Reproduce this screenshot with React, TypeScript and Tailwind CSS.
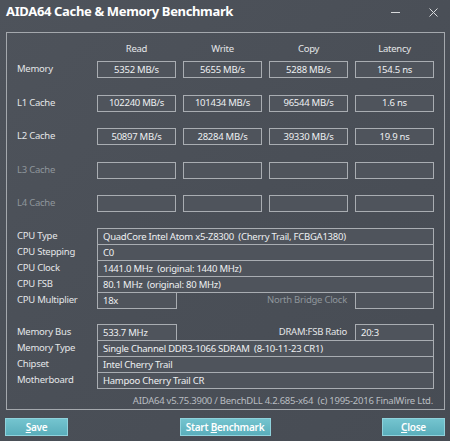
import React from 'react';

const font = { fontFamily: '"Noto Sans", "Open Sans", sans-serif' };

const cacheRows = [
  { label: 'Memory', values: ['5352 MB/s', '5655 MB/s', '5288 MB/s', '154.5 ns'], active: true },
  { label: 'L1 Cache', values: ['102240 MB/s', '101434 MB/s', '96544 MB/s', '1.6 ns'], active: true },
  { label: 'L2 Cache', values: ['50897 MB/s', '28284 MB/s', '39330 MB/s', '19.9 ns'], active: true },
  { label: 'L3 Cache', values: ['', '', '', ''], active: false },
  { label: 'L4 Cache', values: ['', '', '', ''], active: false },
];

const Box = ({ children, className = '' }: { children?: React.ReactNode; className?: string }) => (
  <div className={`h-[17px] border border-[#a9adb2] bg-[#4f545c] flex items-center leading-none whitespace-nowrap ${className}`}>{children}</div>
);

const Label = ({ children, dim }: { children: React.ReactNode; dim?: boolean }) => (
  <div className={`w-[80px] h-[17px] flex items-center ${dim ? 'text-[#8f969c]' : 'text-[#e4e6e8]'}`}>{children}</div>
);

export default function App() {
  return (
    <div className="w-[450px] h-[441px] bg-gradient-to-br from-[#4e535b] via-[#4a4f57] to-[#474c54] text-[9.5px] tracking-[-0.25px] select-none flex flex-col overflow-hidden" style={font}>
      {/* Title bar */}
      <div className="h-[28px] flex items-center pl-[6px] pr-[12px] pb-[4px]">
        <div className="text-[13px] font-bold text-white tracking-[-0.35px]">AIDA64 Cache &amp; Memory Benchmark</div>
        <div className="ml-auto flex items-center gap-[29px] text-[#d8dadc]">
          <svg width="9" height="9" viewBox="0 0 9 9"><path d="M0 4.5h9" stroke="currentColor" strokeWidth="1" /></svg>
          <svg width="9" height="9" viewBox="0 0 9 9"><path d="M0.5 0.5l8 8M8.5 0.5l-8 8" stroke="currentColor" strokeWidth="1" /></svg>
        </div>
      </div>

      {/* Group box */}
      <div className="ml-[6px] mr-[5px] mt-[4px] h-[378px] border border-[#a4a8ad] pl-[10px] flex flex-col">
        {/* Header */}
        <div className="flex pt-[9px] h-[28px] text-[#e4e6e8]">
          <div className="w-[80px]" />
          <div className="flex gap-[7px]">
            {['Read', 'Write', 'Copy', 'Latency'].map((h) => (
              <div key={h} className="w-[79px] text-center">{h}</div>
            ))}
          </div>
        </div>

        {/* Cache results */}
        <div className="flex flex-col gap-[16.5px]">
          {cacheRows.map((r) => (
            <div key={r.label} className="flex items-center">
              <Label dim={!r.active}>{r.label}</Label>
              <div className="flex gap-[7px]">
                {r.values.map((v, i) => (
                  <Box key={i} className="w-[79px] justify-center text-[#eef0f2]">{v}</Box>
                ))}
              </div>
            </div>
          ))}
        </div>

        {/* CPU info */}
        <div className="mt-[16px] flex flex-col">
          {[
            ['CPU Type', 'QuadCore Intel Atom x5-Z8300\u00a0 (Cherry Trail, FCBGA1380)'],
            ['CPU Stepping', 'C0'],
            ['CPU Clock', '1441.0 MHz\u00a0 (original: 1440 MHz)'],
            ['CPU FSB', '80.1 MHz\u00a0 (original: 80 MHz)'],
          ].map(([l, v], i) => (
            <div key={l} className={`flex ${i ? '-mt-px' : ''}`}>
              <Label>{l}</Label>
              <Box className="w-[337px] px-[5px] text-[#eef0f2]">{v}</Box>
            </div>
          ))}
          <div className="flex -mt-px">
            <Label>CPU Multiplier</Label>
            <Box className="w-[80px] px-[5px] text-[#eef0f2]">18x</Box>
            <div className="w-[178px] h-[17px] flex items-center justify-end pr-[8px] text-[#8f969c]">North Bridge Clock</div>
            <Box className="w-[79px]" />
          </div>
        </div>

        {/* Memory info */}
        <div className="mt-[15px] flex flex-col">
          <div className="flex">
            <Label>Memory Bus</Label>
            <Box className="w-[80px] px-[5px] text-[#eef0f2]">533.7 MHz</Box>
            <div className="w-[178px] h-[17px] flex items-center justify-end pr-[8px] text-[#e4e6e8]">DRAM:FSB Ratio</div>
            <Box className="w-[79px] px-[5px] text-[#eef0f2]">20:3</Box>
          </div>
          {[
            ['Memory Type', 'Single Channel DDR3-1066 SDRAM\u00a0 (8-10-11-23 CR1)'],
            ['Chipset', 'Intel Cherry Trail'],
            ['Motherboard', 'Hampoo Cherry Trail CR'],
          ].map(([l, v]) => (
            <div key={l} className="flex -mt-px">
              <Label>{l}</Label>
              <Box className="w-[337px] px-[5px] text-[#eef0f2]">{v}</Box>
            </div>
          ))}
        </div>

        <div className="mt-[5px] pr-[11px] text-right text-[#b9bdc1]">
          AIDA64 v5.75.3900 / BenchDLL 4.2.685-x64&nbsp; (c) 1995-2016 FinalWire Ltd.
        </div>
      </div>

      {/* Buttons */}
      <div className="flex items-center justify-between px-[5px] mt-[8px]">
        <button className="w-[63px] h-[18px] bg-gradient-to-b from-[#74c4cf] to-[#5aaebb] border border-[#8fd2dc] text-white text-[10px] font-semibold leading-none">
          <span className="underline">S</span>ave
        </button>
        <button className="w-[91px] h-[18px] bg-gradient-to-b from-[#74c4cf] to-[#5aaebb] border border-[#8fd2dc] text-white text-[10px] font-semibold leading-none">
          Start <span className="underline">B</span>enchmark
        </button>
        <button className="w-[63px] h-[18px] bg-gradient-to-b from-[#74c4cf] to-[#5aaebb] border border-[#8fd2dc] text-white text-[10px] font-semibold leading-none">
          <span className="underline">C</span>lose
        </button>
      </div>
    </div>
  );
}
